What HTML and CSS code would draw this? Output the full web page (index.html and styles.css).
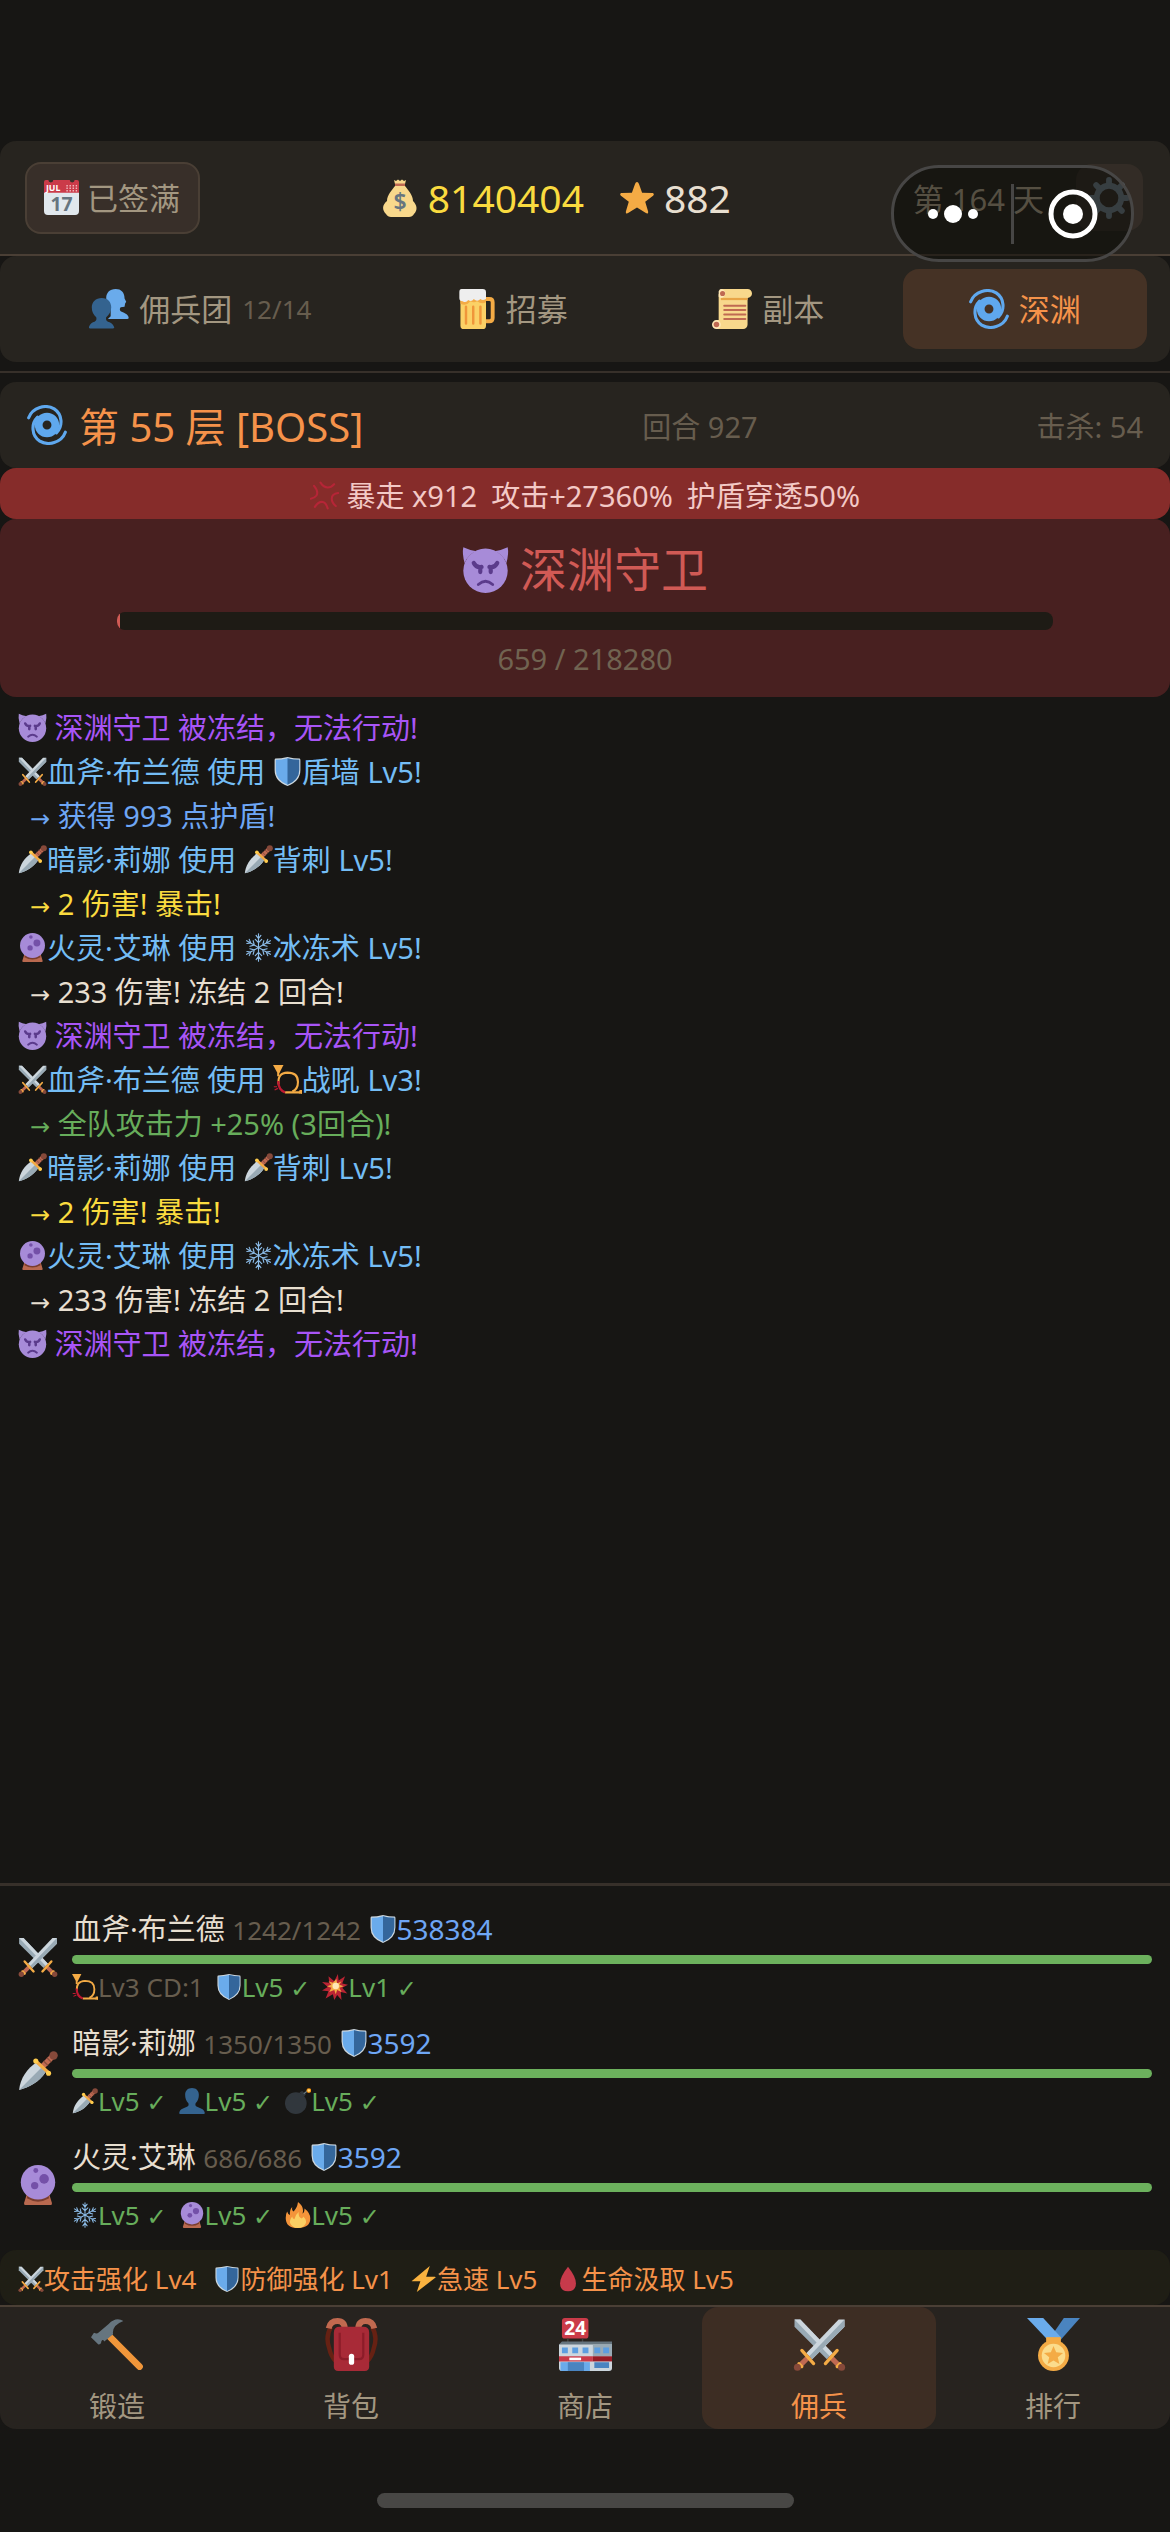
FILE: index.html
```html
<!DOCTYPE html>
<html lang="zh-CN">
<head>
  <meta charset="UTF-8">
  <meta name="viewport" content="width=device-width, initial-scale=1">
  <title>深渊</title>
  <link rel="stylesheet" href="styles.css">
</head>
<body>

  <!-- Icon set, used below with <use> -->
  <svg class="icon-defs" aria-hidden="true">
    <symbol id="star" viewBox="0 0 36 36">
      <path fill="#f4ab45" d="M18 1c1 0 1.500 1 2 2l3.400 9.500 10.600.2c2 .1 2.400 1.500 1 2.800l-8.300 6.400 3 10.200c.5 2-.6 2.800-2.300 1.800L18 28l-9.400 5.900c-1.700 1-2.800.2-2.300-1.800l3-10.200L1 15.500c-1.400-1.300-1-2.700 1-2.800l10.600-.2L16 3c.5-1 1-2 2-2z"/>
    </symbol>
    <symbol id="gear" viewBox="0 0 36 36">
      <circle cx="18" cy="18" r="10.500" fill="none" stroke="#66757f" stroke-width="5"/>
      <path stroke="#66757f" stroke-width="5" stroke-linecap="round" d="M18 2.500V6M18 30v3.500M2.500 18H6M30 18h3.500M7 7l2.500 2.500M26.500 26.500L29 29M29 7l-2.500 2.500M9.500 26.500L7 29"/>
    </symbol>
    <symbol id="bust" viewBox="0 0 36 36">
      <path fill="#34638f" d="M18 0c-6 0-9.500 4-9.500 9.500 0 5 1.500 9 4.500 11.500.8 2.500 0 4-2 5-4 2-9 2.500-10.500 7.500C0 35 .5 36 2 36h32c1.500 0 2-1 1.500-2.500C34 28.500 29 28 25 26c-2-1-2.800-2.500-2-5 3-2.500 4.500-6.500 4.500-11.500C27.500 4 24 0 18 0z"/>
    </symbol>
    <symbol id="team" viewBox="0 0 36 36">
      <path fill="#6aabeb" d="M24 0c-5.500 0-8.500 3.500-8.500 8 0 4.500 1.500 7.500 4 9.500v7L17 27h17.500c1 0 1.500-.5 1-2-1-3-4.500-3.500-7-5-1-1-1-2.500 0-3.500l3.500-.5.500-3 1-1.500-1.500-3C32 3 29 0 24 0z"/>
      <path fill="#34638f" d="M11.500 8C6 8 2.500 11.500 2.500 16.500c0 4 1.500 7 4 9 .5 2 0 3-1.500 4-2 .5-4 1.500-5 4.500-.5 1 0 1.500 1 1.500h20.500c1 0 1.500-.5 1-1.500-1-3-3.500-4-5.500-4.500-1.500-1-2-2-1.500-4 2.500-2 4.500-5 4.500-9C20 11.500 17 8 11.500 8z"/>
    </symbol>
    <symbol id="beer" viewBox="0 0 36 36">
      <path fill="none" stroke="#f4ab45" stroke-width="3.500" d="M25 9h5q3 0 3 3v14q0 3-3 3h-5"/>
      <path fill="#fbd166" d="M4 8h23v25a3 3 0 0 1-3 3H7a3 3 0 0 1-3-3z"/>
      <path fill="#f4ab45" d="M4 8h23v4q-4 2-8-1-3 2-6 0-4 5-9 2z"/>
      <path stroke="#f0963a" stroke-width="2.200" stroke-linecap="round" d="M9 16v15M15.500 16v15M22 16v15"/>
      <path fill="#eee" d="M5 0h19q3 0 3 3v6q-3 2-5 0-3 3-6 0-2 3-5 1-2 3-5 1-3 0-3-3V3q0-3 2-3z"/>
    </symbol>
    <symbol id="scroll" viewBox="0 0 36 36">
      <path fill="#f8d88c" d="M8 0h24a4 4 0 0 1 0 8v24a4 4 0 0 1-4 4H4V28h2V5z"/>
      <path fill="#e8a547" d="M8 8h24v2H8z"/>
      <path fill="#ffe8b6" d="M8 0a4 4 0 0 1 4 4 4 4 0 0 1-4 4q-1 0-2-1V2q1-2 2-2zM4 28a4 4 0 1 1 0 8 4 4 0 0 1 0-8z"/>
      <path stroke="#bf6952" stroke-width="1.800" stroke-linecap="round" d="M11 15h19M11 19h19M11 23h19M11 27h19"/>
      <circle cx="9.500" cy="4" r="2.300" fill="#bf6952"/><circle cx="4" cy="32" r="2.500" fill="#bf6952"/>
    </symbol>
    <symbol id="cyclone" viewBox="0 0 36 36">
      <g fill="none" stroke="#5fa8ee" stroke-linecap="round">
        <circle cx="18" cy="18" r="7.500" stroke-width="7"/>
        <path stroke-width="2.800" d="M1.500 11.500C5 2 17-1 24.500 3.500 32 8.500 32.500 19 26.500 25M34.500 24.500C31 34 19 37 11.500 32.500 4 27.500 3.500 17 9.500 11"/>
      </g>
    </symbol>
    <symbol id="anger" viewBox="0 0 36 36">
      <path fill="none" stroke="#b62537" stroke-width="2.600" stroke-linecap="round" stroke-linejoin="round" d="M5 6q6 7 3 12-2 3-7 4M13 2q4 6 9 6 5 0 8-4M35 15q-8 1-8 7 0 5 5 9M6 32q5-7 10-6 4 1 6 8"/>
    </symbol>
    <symbol id="imp" viewBox="0 0 36 36">
      <path fill="#a78bd8" d="M1 1Q0 6 2 13q3-7 9-9Q5 3 1 1zM35 1q1 5-1 12-3-7-9-9 6-1 10-3z"/>
      <circle cx="18" cy="19" r="17" fill="#a78bd8"/>
      <path fill="none" stroke="#5b3b8c" stroke-width="3.200" stroke-linecap="round" stroke-linejoin="round" d="M9 13q2 4 6 3M27 13q-2 4-6 3M14 16.500v3.500M22 16.500v3.500"/>
      <path fill="none" stroke="#5b3b8c" stroke-width="2.200" stroke-linecap="round" d="M12.500 29.500q5.500-5 11 0"/>
    </symbol>
    <symbol id="dagger" viewBox="0 0 36 36">
      <path fill="#ccd6dd" d="M1 35C2 25 8 16 17 10l8 9C19 28 10 33 1 35z"/>
      <path fill="#99aab5" d="M1 35l20-20 4 4C19 28 10 33 1 35z"/>
      <path stroke="#bf6952" stroke-width="5" d="M22 14l9-9"/>
      <path stroke="#8a4f3c" stroke-width="1.200" d="M23 9l4 4M26 6l4 4"/>
      <path stroke="#f4ab45" stroke-width="3" stroke-linecap="round" d="M16 9l12 11"/>
      <circle cx="32" cy="4" r="3.800" fill="#86493a"/>
      <circle cx="16" cy="9" r="2.300" fill="#ffcc4d"/><circle cx="27.500" cy="20" r="2.300" fill="#ffcc4d"/>
    </symbol>
    <symbol id="swords" viewBox="0 0 36 36">
      <path fill="#99aab5" d="M1 1h4l22 23-4 4L1 6z"/>
      <path fill="#ccd6dd" d="M1 1h4l22 23-2 2z"/>
      <path stroke="#bf6952" stroke-width="3.500" d="M25 26l7 7"/>
      <path fill="#ccd6dd" d="M35 1h-4L9 24l4 4L35 6z"/>
      <path fill="#99aab5" d="M35 1v5L13 28l-2-2z"/>
      <path stroke="#bf6952" stroke-width="3.500" d="M11 26l-7 7"/>
      <path stroke="#f4ab45" stroke-width="2.200" stroke-linecap="round" d="M6 22l8 9M30 22l-8 9M4 31l2 2M32 31l-2 2"/>
      <circle cx="3" cy="33.500" r="2.400" fill="#86493a"/><circle cx="33" cy="33.500" r="2.400" fill="#86493a"/>
    </symbol>
    <symbol id="shield" viewBox="0 0 36 36">
      <path fill="#ccd6dd" d="M18 0q8 2 15 2 1 0 1 2v12q0 14-16 20Q2 30 2 16V4q0-2 1-2 7 0 15-2z"/>
      <path fill="#6aabeb" d="M18 1.500q7 2 14.500 2V16q0 12-14.500 18.500Q3.500 28 3.500 16V3.500Q11 3.500 18 1.500z"/>
      <path fill="#34669b" d="M18 1.500q7 2 14.500 2V16q0 12-14.500 18.500z"/>
    </symbol>
    <symbol id="crystal" viewBox="0 0 36 36">
      <path fill="#b9694f" d="M8 26h20l2.500 8q.5 2-1 2h-23q-1.500 0-1-2z"/>
      <path fill="#7a3d2e" d="M8.500 28h19l.5 2q-10 6-20 0z"/>
      <circle cx="18" cy="15.500" r="15.500" fill="#a78bd8"/>
      <circle cx="23.500" cy="12.500" r="4.300" fill="#7450a8"/><circle cx="15" cy="18.500" r="3.300" fill="#7450a8"/><circle cx="16" cy="5" r="2.200" fill="#7450a8"/>
    </symbol>
    <symbol id="snow" viewBox="0 0 36 36">
      <g fill="none" stroke="#8cbce8" stroke-width="1.400" stroke-linecap="round">
        <path id="flake-arm" d="M18 18V1M15 3l3 4 3-4M14 8l4 4 4-4"/>
        <use href="#flake-arm" transform="rotate(60 18 18)"/>
        <use href="#flake-arm" transform="rotate(120 18 18)"/>
        <use href="#flake-arm" transform="rotate(180 18 18)"/>
        <use href="#flake-arm" transform="rotate(240 18 18)"/>
        <use href="#flake-arm" transform="rotate(300 18 18)"/>
      </g>
    </symbol>
    <symbol id="horn" viewBox="0 0 36 36">
      <path fill="#f4ab45" d="M0 0h13L8 10l-3-1z"/>
      <path fill="none" stroke="#f4ab45" stroke-width="2.600" d="M6.500 8v6M34 34H15"/>
      <path fill="none" stroke="#f4ab45" stroke-width="2.600" d="M7 24q-2-14 11-14.500 13 0 13 11.500 0 9-7 12"/>
      <path fill="none" stroke="#be1931" stroke-width="3" d="M6.500 20q0 11 8.500 14"/>
      <path fill="#f4ab45" d="M33 31h3v5l-4-1z"/>
      <path stroke="#be1931" stroke-width="1.500" d="M1 27h4M2 31l4-2"/>
    </symbol>
    <symbol id="boom" viewBox="0 0 36 36">
      <path fill="#bb2434" d="M22 0l1 9 9-6-4 10 8 2-8 4 7 8-9-2 1 11-6-7-4 7-2-8-10 6 4-10-9-1 8-5L0 11l10 1L9 3l8 7z"/>
      <path fill="#f4ab45" d="M20 7l1 6 6-3-3 5 6 2-6 2 3 6-6-3-2 6-2-6-7 3 3-6-6-2 6-2-4-5 6 2z"/>
      <circle cx="19" cy="16.500" r="4.500" fill="#ffe8b6"/>
    </symbol>
    <symbol id="bomb" viewBox="0 0 36 36">
      <circle cx="15" cy="21" r="15" fill="#31373d"/>
      <path fill="#31373d" d="M20 6l6 6 3-3-5-5z"/>
      <path fill="none" stroke="#66757f" stroke-width="1.800" d="M26 8l5-4"/>
      <circle cx="33" cy="3.500" r="3.300" fill="#f4900c"/><circle cx="33" cy="3.500" r="1.800" fill="#ffe08a"/>
    </symbol>
    <symbol id="fire" viewBox="0 0 36 36">
      <path fill="#f4943a" d="M18 0q7 5 7 12 0 2-1 4 3-1 3-7 8 6 8 14 0 13-17 13T1 22q0-6 2-9 1 4 4 5-1-7 3-11-1 5 2 6 5-5 6-13z"/>
      <path fill="#fbcf63" d="M19 14q-1 7 4 9 2-1 2-3 5 4 4 9-3 7-11 7T7 29q-1-4 3-9 0 3 3 4 1-6 6-10z"/>
    </symbol>
    <symbol id="bolt" viewBox="0 0 36 36">
      <path fill="#f9b23f" d="M26 0L2 20q-2 1 0 1h11L8 36l26-20q1-1-1-1H21z"/>
    </symbol>
    <symbol id="drop" viewBox="0 0 36 36">
      <path fill="#c73a4b" d="M18 1q11 14 11 23 0 11-11 11T7 24Q7 15 18 1z"/>
    </symbol>
    <symbol id="hammer" viewBox="0 0 36 36">
      <path fill="none" stroke="#f0963a" stroke-width="4.500" stroke-linecap="round" d="M13 13l20 20"/>
      <path fill="#66757f" d="M22 2Q17-1 12 4L5 10q-1 1-3 0l-2 3 5 5q2 0 2-2 1-2 2 0l6-5q-1-6 7-9z"/>
    </symbol>
    <symbol id="backpack" viewBox="0 0 36 36">
      <path fill="none" stroke="#662113" stroke-width="3" d="M4 6q-4 7-1 15 1 5 4 8M32 6q4 7 1 15-1 5-4 8"/>
      <path fill="none" stroke="#c1694f" stroke-width="4" d="M2.500 7q1-5 6-5 5 0 5 6M33.500 7q-1-5-6-5-5 0-5 6"/>
      <path fill="#a82a37" d="M10 6h16q4 0 4 4v23q0 3-3 3H9q-3 0-3-3V10q0-4 4-4z"/>
      <path fill="none" stroke="#8c1c29" stroke-width="1.500" d="M10 10v15q0 3 3 3h10q3 0 3-3V10"/>
      <path stroke="#fff" stroke-width="3.600" stroke-linecap="round" d="M18 26v4"/>
    </symbol>
    <symbol id="medal" viewBox="0 0 36 36">
      <path fill="#4a84c0" d="M25 0h11L21 17l-5-4z"/>
      <path fill="#6aabeb" d="M0 0h11l12 13-6 5z"/>
      <path fill="#f4ab45" d="M13 13h10v5H13z"/>
      <circle cx="18" cy="25.500" r="10.500" fill="#f4ab45"/>
      <circle cx="18" cy="25.500" r="8" fill="#fbdc8c"/>
      <path fill="#f4ab45" d="M18 19l1.800 4.300 4.700.4-3.600 3 1.100 4.600-4-2.500-4 2.500 1.100-4.600-3.600-3 4.700-.4z"/>
    </symbol>
  </svg>

  <!-- Resource bar -->
  <header class="topbar">
    <button class="checkin">
      <svg class="icon" viewBox="0 0 36 36" aria-hidden="true">
        <path fill="#e1e8ed" d="M0 12h36v20a4 4 0 0 1-4 4H4a4 4 0 0 1-4-4z"/>
        <path fill="#cb3b49" d="M2 0h2.500a2.500 2.500 0 0 0 5 0h17a2.500 2.500 0 0 0 5 0H34a2 2 0 0 1 2 2v11H0V2a2 2 0 0 1 2-2z"/>
        <text x="2" y="11" font-size="9" font-weight="700" fill="#fff">JUL</text>
        <path stroke="#f0b8bd" stroke-width="1.500" stroke-dasharray="1.500 1.700" d="M23 6h11M23 8.500h11M23 11h11"/>
        <text x="18" y="32" font-size="20" font-weight="700" text-anchor="middle" fill="#66757f">17</text>
      </svg>
      已签满
    </button>
    <div class="resources">
      <span class="coins">
        <svg class="icon" viewBox="0 0 36 38" aria-hidden="true">
          <path fill="#f8d88c" d="M13 7h10c3 4 8 9 8 15 4 4 5 9 1 13-1 2-3 3-5 3H9c-2 0-4-1-5-3-4-4-4-9 1-13 0-6 5-11 8-15zM12 1l2 1 2-1.500L18 2l2-1.500L22 2l2-1-1 4H13z"/>
          <path fill="#bf6952" d="M13 4.500h10V7H13z"/>
          <text x="18" y="31" font-size="23" font-weight="600" text-anchor="middle" fill="#67757f">$</text>
        </svg>
        8140404
      </span>
      <span class="stars"><svg class="icon"><use href="#star"/></svg> 882</span>
    </div>
    <div class="day">
      <span>第 164 天</span>
      <button class="settings" aria-label="设置"><svg class="icon"><use href="#gear"/></svg></button>
    </div>
    <!-- Mini program capsule, floats over the bar -->
    <div class="capsule">
      <button class="capsule-btn" aria-label="更多">
        <svg width="60" height="30" viewBox="0 0 60 30" fill="#fff"><circle cx="10" cy="15" r="5"/><circle cx="30" cy="15" r="9"/><circle cx="50" cy="15" r="5"/></svg>
      </button>
      <button class="capsule-btn close" aria-label="关闭">
        <svg width="50" height="50" viewBox="0 0 50 50"><circle cx="25" cy="25" r="22" fill="none" stroke="#fff" stroke-width="5"/><circle cx="25" cy="25" r="10" fill="#fff"/></svg>
      </button>
    </div>
  </header>

  <!-- Mercenary section tabs -->
  <nav class="tabs">
    <button class="tab"><svg class="icon"><use href="#team"/></svg> 佣兵团 <small>12/14</small></button>
    <button class="tab"><svg class="icon"><use href="#beer"/></svg> 招募</button>
    <button class="tab"><svg class="icon"><use href="#scroll"/></svg> 副本</button>
    <button class="tab active"><svg class="icon"><use href="#cyclone"/></svg> 深渊</button>
  </nav>

  <main class="abyss">
    <div class="floor">
      <h1><svg class="icon"><use href="#cyclone"/></svg> 第 55 层 [BOSS]</h1>
      <span>回合 927</span>
      <span>击杀: 54</span>
    </div>

    <div class="rage">
      <span><svg class="icon"><use href="#anger"/></svg> 暴走 x912</span>
      <span>攻击+27360%</span>
      <span>护盾穿透50%</span>
    </div>

    <section class="boss">
      <h2><svg class="icon"><use href="#imp"/></svg> 深渊守卫</h2>
      <div class="boss-hp"><div class="boss-hp-fill"></div></div>
      <p>659 / 218280</p>
    </section>

    <!-- Battle log -->
    <section class="log">
      <p class="freeze"><svg class="icon"><use href="#imp"/></svg> 深渊守卫 被冻结，无法行动!</p>
      <p class="skill"><svg class="icon"><use href="#swords"/></svg>血斧·布兰德 使用 <svg class="icon"><use href="#shield"/></svg>盾墙 Lv5!</p>
      <p class="result guard"><span class="arrow">→</span> 获得 993 点护盾!</p>
      <p class="skill"><svg class="icon"><use href="#dagger"/></svg>暗影·莉娜 使用 <svg class="icon"><use href="#dagger"/></svg>背刺 Lv5!</p>
      <p class="result crit"><span class="arrow">→</span> 2 伤害! 暴击!</p>
      <p class="skill"><svg class="icon"><use href="#crystal"/></svg>火灵·艾琳 使用 <svg class="icon"><use href="#snow"/></svg>冰冻术 Lv5!</p>
      <p class="result"><span class="arrow">→</span> 233 伤害! 冻结 2 回合!</p>
      <p class="freeze"><svg class="icon"><use href="#imp"/></svg> 深渊守卫 被冻结，无法行动!</p>
      <p class="skill"><svg class="icon"><use href="#swords"/></svg>血斧·布兰德 使用 <svg class="icon"><use href="#horn"/></svg>战吼 Lv3!</p>
      <p class="result buff"><span class="arrow">→</span> 全队攻击力 +25% (3回合)!</p>
      <p class="skill"><svg class="icon"><use href="#dagger"/></svg>暗影·莉娜 使用 <svg class="icon"><use href="#dagger"/></svg>背刺 Lv5!</p>
      <p class="result crit"><span class="arrow">→</span> 2 伤害! 暴击!</p>
      <p class="skill"><svg class="icon"><use href="#crystal"/></svg>火灵·艾琳 使用 <svg class="icon"><use href="#snow"/></svg>冰冻术 Lv5!</p>
      <p class="result"><span class="arrow">→</span> 233 伤害! 冻结 2 回合!</p>
      <p class="freeze"><svg class="icon"><use href="#imp"/></svg> 深渊守卫 被冻结，无法行动!</p>
    </section>
  </main>

  <!-- Party status -->
  <section class="party">
    <div class="member">
      <svg class="icon"><use href="#swords"/></svg>
      <div class="member-info">
        <div class="member-name">血斧·布兰德 <small>1242/1242</small> <span class="armor"><svg class="icon"><use href="#shield"/></svg>538384</span></div>
        <div class="member-hp"></div>
        <div class="skills">
          <span class="cooldown"><svg class="icon"><use href="#horn"/></svg>Lv3 CD:1</span>
          <span><svg class="icon"><use href="#shield"/></svg>Lv5 <i>✓</i></span>
          <span><svg class="icon"><use href="#boom"/></svg>Lv1 <i>✓</i></span>
        </div>
      </div>
    </div>
    <div class="member">
      <svg class="icon"><use href="#dagger"/></svg>
      <div class="member-info">
        <div class="member-name">暗影·莉娜 <small>1350/1350</small> <span class="armor"><svg class="icon"><use href="#shield"/></svg>3592</span></div>
        <div class="member-hp"></div>
        <div class="skills">
          <span><svg class="icon"><use href="#dagger"/></svg>Lv5 <i>✓</i></span>
          <span><svg class="icon"><use href="#bust"/></svg>Lv5 <i>✓</i></span>
          <span><svg class="icon"><use href="#bomb"/></svg>Lv5 <i>✓</i></span>
        </div>
      </div>
    </div>
    <div class="member">
      <svg class="icon"><use href="#crystal"/></svg>
      <div class="member-info">
        <div class="member-name">火灵·艾琳 <small>686/686</small> <span class="armor"><svg class="icon"><use href="#shield"/></svg>3592</span></div>
        <div class="member-hp"></div>
        <div class="skills">
          <span><svg class="icon"><use href="#snow"/></svg>Lv5 <i>✓</i></span>
          <span><svg class="icon"><use href="#crystal"/></svg>Lv5 <i>✓</i></span>
          <span><svg class="icon"><use href="#fire"/></svg>Lv5 <i>✓</i></span>
        </div>
      </div>
    </div>
  </section>

  <div class="buffs">
    <span><svg class="icon"><use href="#swords"/></svg>攻击强化 Lv4</span>
    <span><svg class="icon"><use href="#shield"/></svg>防御强化 Lv1</span>
    <span><svg class="icon"><use href="#bolt"/></svg>急速 Lv5</span>
    <span><svg class="icon"><use href="#drop"/></svg>生命汲取 Lv5</span>
  </div>

  <!-- Bottom navigation -->
  <nav class="bottom-nav">
    <button><svg class="icon"><use href="#hammer"/></svg>锻造</button>
    <button><svg class="icon"><use href="#backpack"/></svg>背包</button>
    <button>
      <svg class="icon" viewBox="0 0 36 36" aria-hidden="true">
        <path fill="#cb3b49" d="M4 0h14q2 0 2 2v10q0 2-2 2H4q-2 0-2-2V2q0-2 2-2z"/>
        <path stroke="#444" d="M6 14v3M16 14v3"/>
        <text x="11" y="11.500" font-size="13" font-weight="700" text-anchor="middle" fill="#fff">24</text>
        <path fill="#66757f" d="M2 16h34v4H0v-2z"/>
        <path fill="#ccd6dd" d="M0 18h36v16q0 2-2 2H2q-2 0-2-2z"/>
        <path fill="#99aab5" d="M23 18h13v8H23z"/>
        <path fill="#5d9ee0" d="M2 20h4v4H2zM9 20h4v4H9zM16 20h4v4h-4zM24 20h4v4h-4zM30 20h4v4h-4z"/>
        <path fill="#cb3b49" d="M0 26h23v3.500H0z"/><path fill="#981c26" d="M23 26h13v3.500H23z"/>
        <path stroke="#fff" stroke-width="1.800" d="M7 27.800h8"/>
        <path fill="#6aabeb" d="M1 30h20v6H1z"/><path fill="#4a84c0" d="M6 30h11v6H6zM24 30h10v4H24z"/>
      </svg>
      商店
    </button>
    <button class="active"><svg class="icon"><use href="#swords"/></svg>佣兵</button>
    <button><svg class="icon"><use href="#medal"/></svg>排行</button>
  </nav>

  <div class="home-bar"></div>

</body>
</html>
```

FILE: styles.css
```css
* {
  box-sizing: border-box;
}

body {
  margin: 0;
  min-height: 100vh;
  padding-top: 141px;
  display: flex;
  flex-direction: column;
  background-color: #171614;
  color: #e8dfd0;
  font-family: "Noto Sans", "Noto Sans CJK SC", sans-serif;
  font-size: 29px;
}

h1, h2, p {
  margin: 0;
  font-weight: normal;
}

button {
  border: none;
  padding: 0;
  background: none;
  color: #a39781;
  font-family: inherit;
  font-size: 31px;
  line-height: 40px;
  cursor: pointer;
}

.icon-defs {
  position: absolute;
  width: 0;
  height: 0;
}

/* Icons follow the text size by default */
.icon {
  width: 1em;
  height: 1em;
  flex: none;
  vertical-align: -0.12em;
}

/* Resource bar */
.topbar {
  position: relative;
  height: 115px;
  padding: 0 27px 0 25px;
  display: flex;
  align-items: center;
  justify-content: space-between;
  background-color: #27241f;
  border-bottom: 2px solid #4a3f35;
  border-radius: 16px 16px 0 0;
}

.checkin {
  height: 72px;
  padding: 0 18px 0 17px;
  display: flex;
  align-items: center;
  gap: 8px;
  background-color: #382f29;
  border: 2px solid #4a3f35;
  border-radius: 16px;
}

.checkin .icon {
  width: 35px;
  height: 35px;
}

.resources {
  display: flex;
  gap: 36px;
  font-size: 39px;
}

.resources span {
  display: flex;
  align-items: center;
  gap: 10px;
}

.coins {
  color: #fadb3f;
}

.coins .icon {
  width: 36px;
  height: 42px;
}

.stars .icon {
  width: 34px;
  height: 34px;
}

.day {
  display: flex;
  align-items: center;
  gap: 32px;
  color: #a39781;
  font-size: 31px;
}

.settings {
  width: 67px;
  height: 67px;
  display: flex;
  align-items: center;
  justify-content: center;
  background-color: #332c26;
  border-radius: 16px;
}

.settings .icon {
  width: 42px;
  height: 42px;
}

/* Capsule over the right end of the bar */
.capsule {
  position: absolute;
  top: 24px;
  right: 36px;
  width: 243px;
  height: 97px;
  display: flex;
  align-items: center;
  background-color: rgba(8, 8, 4, 0.5);
  border: 3px solid #474645;
  border-radius: 48px;
}

.capsule-btn {
  flex: 1;
  height: 60px;
  display: flex;
  align-items: center;
  justify-content: center;
}

.capsule-btn.close {
  border-left: 3px solid #474645;
}

/* Tabs */
.tabs {
  height: 106px;
  padding: 13px 23px;
  display: flex;
  gap: 12px;
  background-color: #27241f;
  border-radius: 16px;
}

.tab {
  flex: 1 1 auto;
  display: flex;
  align-items: center;
  justify-content: center;
  gap: 10px;
  border-radius: 16px;
}

.tab .icon {
  width: 40px;
  height: 40px;
}

.tab small {
  color: #675d4e;
  font-size: 26px;
}

.tab.active {
  background-color: #453225;
  color: #f5924a;
}

/* Abyss screen */
.abyss {
  flex: 1;
  margin-top: 9px;
  padding-top: 9px;
  border-top: 2px solid #37302a;
}

.floor {
  height: 86px;
  padding: 0 27px;
  display: flex;
  align-items: center;
  justify-content: space-between;
  background-color: #27241f;
  border-radius: 16px;
  color: #675d4e;
}

.floor h1 {
  display: flex;
  align-items: center;
  gap: 12px;
  color: #f5924a;
  font-size: 40px;
}

.rage {
  height: 51px;
  display: flex;
  align-items: center;
  justify-content: center;
  gap: 14px;
  background-color: #862c2a;
  border-radius: 16px;
  color: #f3c9c6;
}

.boss {
  height: 178px;
  padding-top: 18px;
  display: flex;
  flex-direction: column;
  align-items: center;
  background-color: #482020;
  border-radius: 16px;
  color: #716351;
}

.boss h2 {
  display: flex;
  align-items: center;
  gap: 11px;
  color: #d15a55;
  font-size: 47px;
  line-height: 64px;
}

.boss-hp {
  width: 80%;
  height: 18px;
  margin: 11px 0 9px;
  overflow: hidden;
  background-color: #1e1b15;
  border-radius: 8px;
}

.boss-hp-fill {
  width: 0.3%;
  height: 100%;
  background-color: #d15a55;
}

.boss p {
  line-height: 40px;
}

/* Battle log */
.log {
  padding: 9px 18px;
}

.log p {
  height: 44px;
  line-height: 44px;
}

.freeze {
  color: #a855f7;
}

.skill {
  color: #74bdf5;
}

.result {
  padding-left: 12px;
}

.guard {
  color: #6ea6f5;
}

.crit {
  color: #fadb3f;
}

.buff {
  color: #67ad5b;
}

.arrow {
  font-family: "DejaVu Sans", sans-serif;
  font-size: 24px;
}

/* Party */
.party {
  padding: 24px 18px 18px;
  display: flex;
  flex-direction: column;
  gap: 20px;
  border-top: 3px solid #37302a;
}

.member {
  display: flex;
  align-items: center;
  gap: 14px;
}

.member > .icon {
  width: 40px;
  height: 40px;
}

.member-info {
  flex: 1;
}

.member-name {
  line-height: 38px;
  height: 40px;
}

.member-name small {
  color: #675d4e;
  font-size: 26px;
}

.armor {
  color: #6ea6f5;
  font-size: 28px;
}

.member-hp {
  height: 9px;
  margin: 5px 0 8px;
  background-color: #6cb15d;
  border-radius: 5px;
}

.skills {
  height: 32px;
  display: flex;
  gap: 12px;
  color: #67ad5b;
  font-size: 26px;
  line-height: 31px;
}

.skills i {
  font-family: "DejaVu Sans", sans-serif;
  font-size: 24px;
  font-style: normal;
}

.cooldown {
  color: #675d4e;
}

.buffs {
  height: 55px;
  padding: 0 18px;
  display: flex;
  align-items: center;
  gap: 18px;
  background-color: #1f1e15;
  border-radius: 16px;
  color: #f5924a;
  font-size: 26px;
}

/* Bottom navigation */
.bottom-nav {
  height: 124px;
  display: grid;
  grid-template-columns: repeat(5, 1fr);
  background-color: #27231f;
  border-top: 2px solid #4a3f35;
  border-radius: 0 0 16px 16px;
}

.bottom-nav button {
  padding-top: 8px;
  display: flex;
  flex-direction: column;
  align-items: center;
  justify-content: center;
  gap: 15px;
  border-radius: 16px;
  font-size: 28px;
}

.bottom-nav .icon {
  width: 53px;
  height: 53px;
}

.bottom-nav .active {
  background-color: #3d2d23;
  color: #f5924a;
}

/* Home indicator */
.home-bar {
  width: 417px;
  max-width: 60%;
  height: 15px;
  margin: 64px auto 24px;
  background-color: #484745;
  border-radius: 8px;
}
```
